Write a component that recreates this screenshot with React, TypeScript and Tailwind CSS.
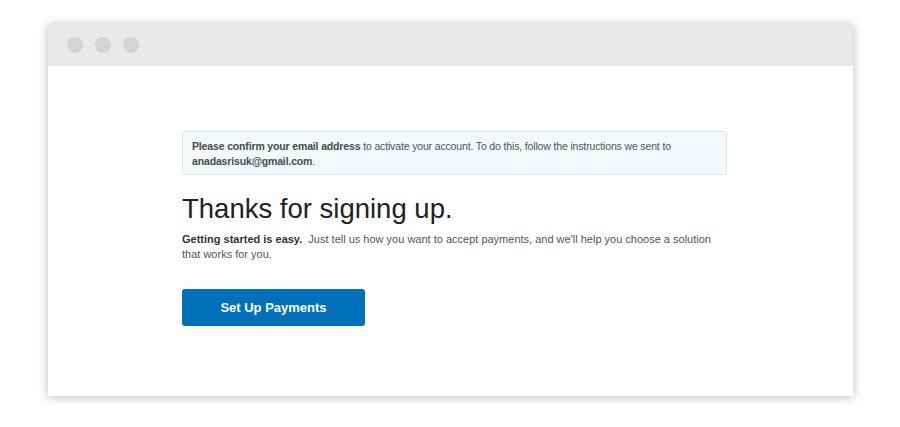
export default function App() {
  return (
    <div className="w-[900px] h-[427px] bg-white pt-[24px] pl-[48px]" style={{ fontFamily: '"Liberation Sans", Arial, sans-serif' }}>
      <div className="w-[805px] h-[372px] bg-white flex flex-col shadow-[0_1px_9px_rgba(60,60,80,0.35)]">
        <div className="h-[42px] bg-[#e8e9ea] flex items-center gap-[12px] pl-[19px]">
          <div className="w-[16px] h-[16px] rounded-full bg-[#d4d4d4]" />
          <div className="w-[16px] h-[16px] rounded-full bg-[#d4d4d4]" />
          <div className="w-[16px] h-[16px] rounded-full bg-[#d4d4d4]" />
        </div>
        <div className="pl-[134px] pt-[65px]">
          <div className="w-[545px] h-[44px] bg-[#f3f8fb] border border-[#dbe7ee] rounded-[3px] px-[9px] pt-[7px] text-[10.5px] tracking-[-0.15px] leading-[15px] text-[#555]">
            <span className="font-bold text-[#4a4a4a]">Please confirm your email address</span> to activate your account. To do this, follow the instructions we sent to <span className="font-bold text-[#4a4a4a]">anadasrisuk@gmail.com</span>.
          </div>
          <h1 className="mt-[17px] text-[27.5px] leading-[34px] text-[#222]">Thanks for signing up.</h1>
          <p className="mt-[6px] w-[545px] text-[11px] leading-[15px] text-[#555]">
            <span className="font-bold text-[#333]">Getting started is easy.</span>&nbsp; Just tell us how you want to accept payments, and we'll help you choose a solution that works for you.
          </p>
          <button className="mt-[27px] w-[183px] h-[37px] rounded-[3px] bg-[#0070ba] text-white font-bold text-[13px]">Set Up Payments</button>
        </div>
      </div>
    </div>
  );
}
